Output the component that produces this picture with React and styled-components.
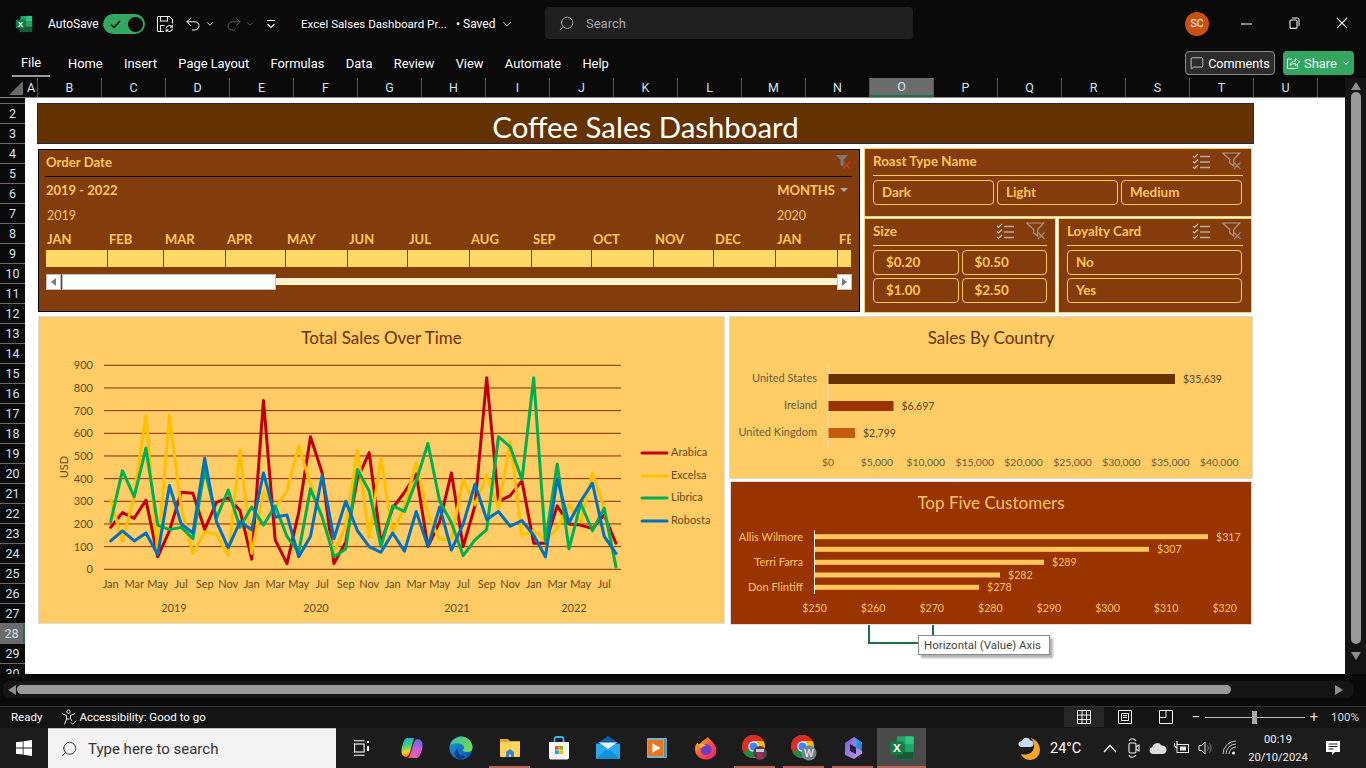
import React from "react";
import styled, { createGlobalStyle } from "styled-components";
import { ChevronDown, Search as SearchGlyph, Undo2, Redo2, MessageSquare } from "lucide-react";

const Global = createGlobalStyle`
  * { box-sizing: border-box; }
  html, body { margin: 0; padding: 0; background: #0a0a0a; overflow: hidden; }
  body { font-family: Roboto, "Liberation Sans", sans-serif; }
`;

const UI = `Roboto, "Liberation Sans", sans-serif`;
const CAL = `Lato, "Open Sans", sans-serif`;

const Page = styled.div`
  width: 1366px; height: 768px; display: flex; flex-direction: column; background: #0a0a0a; overflow: hidden;
`;

/* ---------- title bar ---------- */
const TitleBar = styled.header`
  height: 46px; flex: none; display: flex; align-items: center; padding-top: 2px; color: #fff; font-size: 12px;
`;
const TitleItem = styled.div`
  flex: none; display: flex; align-items: center; justify-content: center;
  width: ${p => p.$w}px; margin-left: ${p => p.$ml || 0}px;
  color: ${p => p.$dim ? "#5e5e5e" : "#fff"}; white-space: nowrap;
`;
const TitleText = styled.div`
  flex: none; width: ${p => p.$w}px; margin-left: ${p => p.$ml || 0}px; white-space: nowrap; color: #fff; font-size: ${p => p.$fs || 12}px;
`;
const Toggle = styled.div`
  flex: none; width: 42px; height: 20px; margin-left: 8px; border-radius: 10px; background: #33a661;
  display: flex; align-items: center; justify-content: space-between; padding: 0 2px 0 7px;
`;
const ToggleKnob = styled.span`
  width: 15px; height: 15px; border-radius: 50%; background: #0a0a0a;
`;
const SearchBox = styled.div`
  flex: none; margin-left: 31px; width: 368px; height: 32px; margin-top: -2px; border-radius: 4px; background: #1f1f1f;
  display: flex; align-items: center; padding-left: 13px; gap: 11px; color: #a8a8a8; font-size: 13px;
`;
const FlippedSearch = styled(SearchGlyph)`
  transform: scaleX(-1); flex: none;
`;
const Avatar = styled.div`
  flex: none; width: 24px; height: 24px; border-radius: 50%; background: #ca5010; color: #fff; margin: -1px 13px 0 272px;
  display: flex; align-items: center; justify-content: center; font-size: 10.5px;
`;
const WinButton = styled.div`
  flex: none; width: 48px; display: flex; align-items: center; justify-content: center; margin-top: -2px;
`;

/* ---------- ribbon tabs ---------- */
const TabsBar = styled.nav`
  height: 32px; flex: none; display: flex; align-items: center; padding: 2px 0 0 12px; color: #fff; font-size: 12.9px; font-family: ${UI};
`;
const FileTab = styled.div`
  width: 38px; height: 28px; padding-top: 1px; display: flex; align-items: center; justify-content: center;
  border-bottom: 2px solid #9a9a9a; margin-right: 18px;
`;
const Tab = styled.div`
  margin-right: 21.3px; white-space: nowrap;
`;
const TabActions = styled.div`
  margin-left: auto; display: flex; gap: 8px; padding-right: 12px;
`;
const CommentsButton = styled.div`
  width: 90px; height: 24px; border: 1px solid #8a8a8a; border-radius: 4px; background: #2c2c2c;
  display: flex; align-items: center; justify-content: center; gap: 4px; font-size: 12.6px;
`;
const ShareButton = styled.div`
  width: 71px; height: 24px; border-radius: 4px; background: #33a661; color: #eaf6ee;
  display: flex; align-items: center; justify-content: center; gap: 4px; font-size: 12.9px;
`;

/* ---------- grid frame ---------- */
const GridFrame = styled.div`
  flex: none; height: 596px; display: flex;
`;
const GridMain = styled.div`
  width: 1345px; display: flex; flex-direction: column;
`;
const ColHeaders = styled.div`
  height: 19px; flex: none; display: flex; background: #0a0a0a; color: #d5e3ee; font-size: 12.5px; font-family: ${UI};
`;
const Corner = styled.div`
  width: 25px; flex: none; position: relative;
  &::after { content: ""; position: absolute; right: 2px; bottom: 2px; border-style: solid; border-width: 0 0 14px 14px; border-color: transparent transparent #6a6a6a transparent; }
`;
const ColHead = styled.div`
  flex: none; width: ${p => p.$w}px; display: flex; align-items: center; justify-content: center;
  border-right: 1px solid #555; 
  background: ${p => p.$on ? "#6b6b6b" : "transparent"};
  border-bottom: ${p => p.$on ? "2px solid #1e7145" : "none"};
`;
const SheetRow = styled.div`
  flex: 1; display: flex; min-height: 0; border-top: 1px solid #8a8a8a;
`;
const RowHeaders = styled.div`
  width: 25px; flex: none; background: #0a0a0a; display: flex; flex-direction: column; overflow: hidden;
  color: #d5e3ee; font-size: 12.5px; font-family: ${UI};
`;
const RowHead = styled.div`
  flex: none; height: ${p => p.$h || 20}px; display: flex; align-items: center; justify-content: center; overflow: hidden;
  border-bottom: 1px solid #6a6a6a;
  background: ${p => p.$on ? "#6b6b6b" : "transparent"};
  border-right: ${p => p.$on ? "2px solid #1e7145" : "none"};
`;
const Sheet = styled.main`
  flex: 1; background: #fff; position: relative; padding: 5px 0 0 12px; overflow: hidden;
`;
const VScroll = styled.div`
  width: 21px; flex: none; background: #141414; display: flex; flex-direction: column; align-items: center; padding-top: 4px;
`;
const VThumb = styled.div`
  width: 10px; height: 552px; margin-top: 2px; border-radius: 5px; background: #9a9a9a;
`;
const Arrow = styled.span`
  width: 0; height: 0; border-style: solid; flex: none;
  ${p => p.$dir === "up" && `border-width: 0 5px 8px 5px; border-color: transparent transparent #8e8e8e transparent;`}
  ${p => p.$dir === "down" && `border-width: 8px 5px 0 5px; border-color: #8e8e8e transparent transparent transparent; margin-top: 8px;`}
  ${p => p.$dir === "left" && `border-width: 5px 8px 5px 0; border-color: transparent #8e8e8e transparent transparent;`}
  ${p => p.$dir === "right" && `border-width: 5px 0 5px 8px; border-color: transparent transparent transparent #8e8e8e; margin-left: auto;`}
`;

/* ---------- dashboard ---------- */
const Banner = styled.div`
  width: 1217px; height: 41px; background: #643200; border: 1px solid #1f2b4a; color: #fff;
  display: flex; align-items: center; justify-content: center; font: 400 29.4px ${CAL}; padding-top: 6px;
`;
const TopRow = styled.div`
  display: flex; margin: 4px 0 0 1px; height: 165px; gap: 4px;
`;
const Timeline = styled.section`
  width: 822px; height: 163px; margin-top: 1px; background: #833c0b; border: 1px solid #000;
  padding: 0 7px 0 6px; color: #ffc75f; font-family: ${CAL};
`;
const TimelineHead = styled.div`
  height: 27px; padding: 0 0 2px 1px; display: flex; align-items: center; justify-content: space-between; border-bottom: 1px solid #000;
  font-size: 13.2px; font-weight: 700;
`;
const TimelineSpan = styled.div`
  height: 26px; display: flex; align-items: center; justify-content: space-between; padding: 0 4px 0 1px; font-size: 13px; font-weight: 700;
`;
const MonthsMenu = styled.div`
  display: flex; align-items: center; gap: 5px;
`;
const MiniCaret = styled.span`
  border-style: solid; border-width: 4px 4px 0 4px; border-color: #a8a8a8 transparent transparent transparent;
`;
const YearRow = styled.div`
  height: 24px; display: flex; align-items: center; justify-content: space-between; padding: 0 46px 0 2px; font-size: 12.5px;
`;
const Months = styled.div`
  display: flex; margin-left: 1px;
`;
const Month = styled.div`
  flex: none; width: ${p => p.$w}px; overflow: hidden;
`;
const MonthName = styled.div`
  height: 23px; display: flex; align-items: center; font-size: 13px; font-weight: 700; white-space: nowrap; padding-left: 1px;
`;
const MonthBar = styled.div`
  height: 17px; background: #ffd966; border-right: ${p => p.$last ? "none" : "1px solid #833c0b"};
`;
const TimeScroll = styled.div`
  display: flex; align-items: center; height: 17px; margin: 6px 0 0 1px; width: 806px;
`;
const ScrollBtn = styled.div`
  flex: none; width: 15px; height: 16px; background: #fff; border: 1px solid #bdbdbd; display: flex; align-items: center; justify-content: center;
`;
const ScrollGlyph = styled.span`
  border-style: solid; border-width: 4px 0 4px 5px; border-color: transparent transparent transparent #7a7a7a;
  transform: ${p => p.$left ? "scaleX(-1)" : "none"};
`;
const TimeThumb = styled.div`
  flex: none; width: 214px; height: 16px; background: #fff; border: 1px solid #bdbdbd; margin-left: 1px;
`;
const TimeTrack = styled.div`
  flex: 1; height: 7px; background: #fff2cc;
`;
const SlicerStack = styled.div`
  width: 388px; display: flex; flex-direction: column; gap: 1px;
`;
const SlicerRow = styled.div`
  display: flex; gap: 2px; flex: none;
`;
const Slicer = styled.section`
  flex: none; width: ${p => p.$w}px; height: ${p => p.$h}px; background: #843c0c; border: 1px solid #ffcc66;
  padding: 0 8px; font-family: ${CAL}; color: #ffc65c; font-weight: 700; font-size: 13.4px;
`;
const SlicerHead = styled.div`
  height: 27px; padding-bottom: 2px; display: flex; align-items: center; border-bottom: 1px solid #ffcc66;
`;
const SlicerTitle = styled.div`
  flex: 1;
`;
const SlicerTools = styled.div`
  display: flex; align-items: center; gap: 11px; margin-right: 1px;
`;
const SlicerGrid = styled.div`
  display: grid; grid-template-columns: repeat(${p => p.$cols}, 1fr); gap: 3px; margin: 4px ${p => p.$cols === 2 ? 0 : 1}px 0 0;
`;
const SlicerItem = styled.div`
  height: 25px; padding: 0 0 1px ${p => p.$pad || 8}px; border: 1px solid #ffc75f; border-radius: 4px; display: flex; align-items: center;
`;
const BottomRow = styled.div`
  display: flex; gap: 4px; margin: 3px 0 0 1px; position: relative;
`;
const LinePanel = styled.section`
  width: 687px; height: 308px; background: #ffcc66; border: 1px solid #dcdcdc; display: flex; flex-direction: column;
`;
const ChartTitle = styled.h2`
  margin: 0; flex: none; height: ${p => p.$h}px; display: flex; align-items: center; justify-content: center;
  padding: ${p => p.$top || 0}px 0 ${p => p.$bottom || 0}px;
  font: 400 17px ${CAL}; color: ${p => p.$light ? "#ffc65c" : "#663300"};
`;
const RightCol = styled.div`
  width: 524px; display: flex; flex-direction: column; align-items: center; gap: 2px;
`;
const CountryPanel = styled.section`
  width: 524px; height: 163px; background: #ffcc66; border: 1px solid #d5dcd8; display: flex; flex-direction: column;
`;
const CustomersPanel = styled.section`
  width: 522px; height: 144px; background: #993300; border: 1px solid #dcdcdc; display: flex; flex-direction: column;
`;
const Plot = styled.svg`
  display: block; flex: none; font-family: ${CAL};
`;
const SelectBracket = styled.div`
  position: absolute; left: 830px; top: 309px; width: 66px; height: 19px;
  border-left: 2px solid #1e7145; border-bottom: 2px solid #1e7145;
  &::after { content: ""; position: absolute; right: 0; top: 0; height: 12px; border-right: 2px solid #1e7145; }
`;
const Tooltip = styled.div`
  position: absolute; left: 880px; top: 319px; width: 132px; height: 20px; background: #fff; border: 1px solid #8a8a8a;
  box-shadow: 3px 3px 2px rgba(0,0,0,.3); font: 400 11.5px ${UI}; color: #444; display: flex; align-items: center; padding-left: 5px; white-space: nowrap;
`;

/* ---------- scroll + status ---------- */
const HScroll = styled.div`
  height: 33px; flex: none; padding: 7px 13px 8px 3px; border-bottom: 1px solid #333; display: flex; align-items: stretch;
`;
const HTrack = styled.div`
  flex: 1; background: #151515; border-radius: 6px; display: flex; align-items: center; padding: 0 10px 0 5px;
`;
const HThumb = styled.div`
  width: 1214px; height: 9px; border-radius: 5px; background: #999; margin-left: 1px;
`;
const StatusBar = styled.footer`
  height: 21px; flex: none; background: #141414; display: flex; align-items: center; color: #fff; font-size: 11.5px; font-family: ${UI}; padding-bottom: 1px;
`;
const StatusText = styled.div`
  margin-left: ${p => p.$ml || 0}px; white-space: nowrap; display: flex; align-items: center;
`;
const ViewButton = styled.div`
  width: 40px; height: 20px; margin-right: 1px; display: flex; align-items: center; justify-content: center; background: ${p => p.$on ? "#262626" : "transparent"};
`;
const ViewGroup = styled.div`
  margin-left: auto; display: flex;
`;
const ZoomGroup = styled.div`
  display: flex; align-items: center; margin-left: 3px; margin-right: 7px; color: #ddd;
`;
const ZoomTrack = styled.div`
  width: 100px; height: 1px; background: #bbb; margin: 0 3px; position: relative;
  &::after { content: ""; position: absolute; left: 47px; top: -6px; width: 5px; height: 13px; background: #a8a8a8; }
`;
const ZoomSign = styled.span`
  font-size: 15px; width: 12px; text-align: center;
`;
const ZoomValue = styled.span`
  margin-left: 11px; font-size: 11.5px; width: 28px;
`;

/* ---------- taskbar ---------- */
const Taskbar = styled.div`
  height: 40px; flex: none; background: #1c1c1c; display: flex; align-items: stretch; color: #fff;
`;
const StartButton = styled.div`
  width: 48px; display: flex; align-items: center; justify-content: center;
`;
const TaskSearch = styled.div`
  width: 288px; background: #f3f3f3; border-top: 1px solid #bdbdbd; display: flex; align-items: center; padding-left: 12px; gap: 10px;
  color: #333; font-size: 15px; font-family: ${UI};
`;
const TaskViewButton = styled.div`
  width: 51px; display: flex; align-items: center; justify-content: center;
`;
const TaskIcon = styled.div`
  width: 49px; position: relative; display: flex; align-items: center; justify-content: center;
  background: ${p => p.$active ? "#4a4a4a" : "transparent"};
  ${p => p.$open && `&::after { content: ""; position: absolute; bottom: 0; height: 2px; left: ${p.$active ? 0 : 4}px; right: ${p.$active ? 0 : 4}px; background: #b5655a; }`}
`;
const Tray = styled.div`
  margin-left: auto; display: flex; align-items: center; padding-right: 14px; font-family: ${UI};
`;
const Temp = styled.div`
  width: 30px; margin: 0 18px 0 8px; font-size: 14.5px; white-space: nowrap;
`;
const TrayIcon = styled.div`
  width: 24px; display: flex; align-items: center; justify-content: center;
`;
const Clock = styled.div`
  width: 72px; padding-top: 1px; text-align: center; font-size: 11.2px; line-height: 18px; color: #f2f2f2;
`;
const Notify = styled.div`
  width: 38px; display: flex; justify-content: center;
`;

/* ---------- icons ---------- */
const ExcelLogo = ({ s = 18 }) => (
  <svg width={s} height={s} viewBox="0 0 20 20">
    <rect x="6" y="1" width="13" height="18" rx="1" fill="#21a366" />
    <rect x="12.5" y="1" width="6.5" height="6" fill="#33c481" />
    <rect x="6" y="7" width="6.5" height="6" fill="#107c41" />
    <rect x="12.5" y="7" width="6.5" height="6" fill="#21a366" />
    <rect x="6" y="13" width="13" height="6" fill="#185c37" />
    <rect x="1" y="5" width="10" height="10" rx="1" fill="#107c41" />
    <text x="6" y="13" textAnchor="middle" fontSize="9" fontWeight="700" fill="#fff" fontFamily="Liberation Sans">X</text>
  </svg>
);
const SaveIcon = () => (
  <svg width="18" height="18" viewBox="0 0 18 18" fill="none" stroke="#e8e8e8" strokeWidth="1.1">
    <path d="M1.5 1.5h12l3 3v4M8 16.5H1.5z" />
    <path d="M1.5 1.5v15M4.5 1.5v4.5h7V1.5M4.5 16.5v-6h4" />
    <path d="M10 13.5a3.3 3.3 0 0 1 6-1.5M16.5 13.5a3.3 3.3 0 0 1-6 1.5M16.3 10v2.3H14M10.2 17v-2.3h2.3" />
  </svg>
);
const CustomizeIcon = () => (
  <svg width="12" height="12" viewBox="0 0 12 12" fill="none" stroke="#e8e8e8" strokeWidth="1.2">
    <path d="M2 2.5h8M2.5 6l3.5 3.5L9.5 6" />
  </svg>
);
const MinIcon = () => <svg width="11" height="11" viewBox="0 0 11 11"><path d="M0 6h11" stroke="#eee" strokeWidth="1.1" /></svg>;
const RestoreIcon = () => (
  <svg width="11" height="12" viewBox="0 0 11 12" fill="none" stroke="#eee" strokeWidth="1.1">
    <rect x="1" y="3" width="7" height="8.4" rx="1.2" /><path d="M3 1h5.5a1.5 1.5 0 0 1 1.5 1.5V9" />
  </svg>
);
const CloseIcon = () => <svg width="12" height="12" viewBox="0 0 12 12"><path d="M1 1l10 10M11 1L1 11" stroke="#eee" strokeWidth="1.1" /></svg>;
const ShareIcon = () => (
  <svg width="14" height="14" viewBox="0 0 14 14" fill="none" stroke="#eaf6ee" strokeWidth="1">
    <path d="M6 3H1.5v9.5h10V8" /><path d="M4 9.5c.5-3 2.5-4.5 5.5-4.5V2.5l4 3.5-4 3.5V7.5C7 7.5 5.5 8 4 9.5z" />
  </svg>
);
const MultiSelect = () => (
  <svg width="19" height="17" viewBox="0 0 19 17" fill="none" stroke="#cfc6b8" strokeWidth="1.1">
    <path d="M1 3l1.5 1.5L6 1M1 8.5L2.5 10 6 6.5M1 14l1.5 1.500L6 12" />
    <path d="M8 3.5h10M8 9h10M8 14.5h10" strokeWidth="1.5" stroke="#b9ab99" />
  </svg>
);
const ClearFilter = () => (
  <svg width="20" height="18" viewBox="0 0 20 18" fill="none">
    <path d="M.7 1h17l-6 6.500V14l-4-3V7.500z" stroke="#a89a8a" strokeWidth="1.2" />
    <path d="M12 10.500l6.500 6.500M18.500 10.500L12 17" stroke="#a08f7e" strokeWidth="1.2" />
  </svg>
);
const TimelineClear = () => (
  <svg width="17" height="16" viewBox="0 0 17 16">
    <path d="M1 1h12l-4.500 5v7l-3-2V6z" fill="#7a7a7a" />
    <path d="M8.500 8l6.500 6.500M15 8l-6.500 6.500" stroke="#c8401e" strokeWidth="1.4" />
  </svg>
);
const AccessIcon = () => (
  <svg width="17" height="17" viewBox="0 0 17 17" fill="none" stroke="#e8e8e8" strokeWidth="1">
    <circle cx="7.500" cy="2.700" r="1.700" />
    <path d="M1 4.500l4.500 2v3.500L3.500 15.500M14 4.500l-4.500 2v3L11 12M5.500 10h3" />
    <path d="M10 13.500l1.700 1.800 3.500-3.800" />
  </svg>
);
const NormalView = () => (
  <svg width="14" height="14" viewBox="0 0 14 14" fill="none" stroke="#f2f2f2"><path d="M.5.5h13v13H.5zM.5 5h13M.5 9.500h13M5 .5v13M9.500.5v13" /></svg>
);
const LayoutView = () => (
  <svg width="14" height="14" viewBox="0 0 14 14" fill="none" stroke="#f2f2f2"><path d="M.5.5h13v13H.5zM3.500 3.500h7v7h-7zM5 5.500h4M5 7.500h4" /></svg>
);
const BreakView = () => (
  <svg width="14" height="14" viewBox="0 0 14 14" fill="none" stroke="#f2f2f2"><path d="M.5.5h13v13H.5zM7 .5v7H.5" /></svg>
);
const WindowsIcon = () => (
  <svg width="16" height="16" viewBox="0 0 16 16" fill="#fff"><path d="M0 2.300l6.700-.9v6.200H0zM7.500 1.300L16 0v7.600H7.500zM0 8.400h6.700v6.200L0 13.700zM7.500 8.400H16V16l-8.500-1.200z" /></svg>
);
const TaskViewIcon = () => (
  <svg width="16" height="16" viewBox="0 0 16 16" fill="none" stroke="#fff" strokeWidth="1.100">
    <path d="M0 .7h10.500M0 15.300h10.500" /><rect x=".6" y="4" width="9.500" height="8" />
    <path d="M14 1v2M14 6v5" strokeWidth="2" />
  </svg>
);
const CopilotIcon = () => (
  <svg width="24" height="24" viewBox="0 0 24 24">
    <defs>
      <linearGradient id="cpA" x1="0.3" y1="0" x2="0.5" y2="1"><stop offset="0" stopColor="#1fa8ee" /><stop offset=".4" stopColor="#3dd17c" /><stop offset=".72" stopColor="#f5d020" /><stop offset="1" stopColor="#f0583a" /></linearGradient>
      <linearGradient id="cpB" x1="0.5" y1="0" x2="0.5" y2="1"><stop offset="0" stopColor="#5a6be8" /><stop offset=".5" stopColor="#c45ae0" /><stop offset="1" stopColor="#ee5fa0" /></linearGradient>
    </defs>
    <path d="M7 2h7l-4 14c-.8 3-2 5-4 5-3 0-5-3-4.500-7C2 10 3.500 3 7 2z" fill="url(#cpA)" />
    <path d="M17 22h-8l4-13c.8-3 2.500-6 4.500-6 3 0 5.500 3 5 7-.5 4-2 11-5.500 12z" fill="url(#cpB)" />
    <path d="M9.500 20c-1 1.500-2 2-3 2h8c-2.500 0-4-1-5-2z" fill="#f0583a" />
  </svg>
);
const EdgeIcon = () => (
  <svg width="24" height="24" viewBox="0 0 24 24">
    <defs>
      <linearGradient id="edA" x1="0" y1="0" x2="1" y2="1"><stop offset="0" stopColor="#35c1a0" /><stop offset="1" stopColor="#7fdc4a" /></linearGradient>
      <linearGradient id="edB" x1="0" y1="0" x2="1" y2="1"><stop offset="0" stopColor="#1f9be0" /><stop offset="1" stopColor="#0b4fa8" /></linearGradient>
    </defs>
    <circle cx="12" cy="12" r="11.500" fill="url(#edB)" />
    <path d="M1 10C3 3 9 .5 12 .5c6 0 11.500 4.500 11.500 11 0 3-2.500 4.500-5 4.500-3 0-4.500-1-5-2 2-1 2-4-.5-5.500C9 6.500 3 6.500 1 10z" fill="url(#edA)" />
    <path d="M9 14c0 4 4 7 8 6-2 2.500-5 3.500-7 3-3-.6-5-4-4-7 .5-1.500 1.500-3 3-3.500-.3.400 0 1 0 1.500z" fill="#0e3f8c" />
  </svg>
);
const FolderIcon = () => (
  <svg width="22" height="20" viewBox="0 0 22 20">
    <path d="M1 1h8l2 2h10v3H1z" fill="#e0a92e" />
    <rect x="1" y="4" width="20" height="15" rx="1" fill="#ffd55c" />
    <path d="M7 19v-5l4-3 4 3v5h-3v-2.500h-2V19z" fill="#2f86d6" />
  </svg>
);
const StoreIcon = () => (
  <svg width="22" height="24" viewBox="0 0 22 24">
    <path d="M6.500 7V3a2 2 0 0 1 2-2h5a2 2 0 0 1 2 2v4" fill="none" stroke="#3bb7ea" strokeWidth="1.800" />
    <path d="M1 6h20v15.500a2 2 0 0 1-2 2H3a2 2 0 0 1-2-2z" fill="#f7f7f7" />
    <rect x="7" y="10" width="3.700" height="3.700" fill="#f25022" /><rect x="11.300" y="10" width="3.700" height="3.700" fill="#7fba00" />
    <rect x="7" y="14.300" width="3.700" height="3.700" fill="#00a4ef" /><rect x="11.300" y="14.300" width="3.700" height="3.700" fill="#ffb900" />
  </svg>
);
const MailIcon = () => (
  <svg width="24" height="24" viewBox="0 0 24 24">
    <path d="M0 8L12 0l12 8v2H0z" fill="#0f5fa8" />
    <path d="M0 8h24v15H0z" fill="#28a8ea" />
    <path d="M3 6.500h18L12 13z" fill="#e7f4fc" />
    <path d="M0 23l10-9 2 1 2-1 10 9z" fill="#1590da" />
  </svg>
);
const MediaIcon = () => (
  <svg width="22" height="22" viewBox="0 0 22 22">
    <rect x="1" y="1" width="20" height="20" rx="1" fill="#7fb2cc" />
    <rect x="2" y="3" width="15" height="16" rx="1" fill="#e8781f" />
    <path d="M6.500 6.500v9l8-4.500z" fill="#fff" />
    <path d="M18 2h2.500v18H18z" fill="#5b8fa8" />
  </svg>
);
const FirefoxIcon = () => (
  <svg width="24" height="24" viewBox="0 0 24 24">
    <defs>
      <linearGradient id="ffA" x1="0" y1="0" x2="1" y2="1"><stop offset="0" stopColor="#ffbd2e" /><stop offset=".5" stopColor="#ff5634" /><stop offset="1" stopColor="#e31587" /></linearGradient>
    </defs>
    <path d="M14 1c1 2.500 3 3 5 5.500 3 3.500 4 7 3 10.500-1.500 4.500-5.500 6.500-10 6.500C6 23.500 1 19 1 13c0-3 1-5 2.500-6.500C4 8 5 8.500 6 8.500 7 5 11 4 14 1z" fill="url(#ffA)" />
    <circle cx="12" cy="13.500" r="5.500" fill="#6e3bc9" />
    <path d="M5 8c3-1.500 6 .5 7 2-3 0-4 1-4.500 2.500C6.500 12 5 10 5 8z" fill="#ffb12e" />
  </svg>
);
const ChromeIcon = ({ badge }) => (
  <svg width="26" height="26" viewBox="0 0 26 26">
    <circle cx="11.500" cy="11.500" r="11.500" fill="#d93025" />
    <path d="M11.500 11.500L1.500 17.300A11.500 11.500 0 0 0 11.500 23c2 0 4-.5 5.700-1.500z" fill="#1e8e3e" />
    <path d="M11.500 6h10A11.500 11.500 0 0 1 11.500 23l5.500-9.500z" fill="#fbbc04" />
    <path d="M1.500 5.700L6.500 14.500 11.500 6h10A11.500 11.500 0 0 0 11.500 0 11.500 11.500 0 0 0 1.500 5.700z" fill="#d93025" />
    <circle cx="11.500" cy="11.500" r="5.200" fill="#fff" />
    <circle cx="11.500" cy="11.500" r="4.100" fill="#4285f4" />
    {badge === "w" ? (
      <>
        <circle cx="18" cy="18" r="7.500" fill="#6f8490" />
        <text x="18" y="21.500" textAnchor="middle" fontSize="10" fill="#fff" fontFamily="Liberation Sans">W</text>
      </>
    ) : (
      <>
        <circle cx="18" cy="18" r="7" fill="#56404a" />
        <path d="M14 14h8v3h-8z" fill="#c9c9c9" /><path d="M16 17h4l1 7h-6z" fill="#a02c5c" />
      </>
    )}
  </svg>
);
const M365Icon = () => (
  <svg width="22" height="24" viewBox="0 0 22 24">
    <defs>
      <linearGradient id="msA" x1="0" y1="0" x2="1" y2="1"><stop offset="0" stopColor="#7a5ad6" /><stop offset="1" stopColor="#c39be8" /></linearGradient>
      <linearGradient id="msB" x1="0" y1="0" x2="1" y2="1"><stop offset="0" stopColor="#25b4e6" /><stop offset="1" stopColor="#2e6ed6" /></linearGradient>
    </defs>
    <path d="M12 1l8 5.500v11L12 23l-9-4V7z" fill="url(#msA)" />
    <path d="M12 1l8 5.500V15l-6-3.500V6z" fill="url(#msB)" />
    <path d="M8 8l6 3.500V18l-6-3z" fill="#231f3a" />
  </svg>
);
const WeatherIcon = () => (
  <svg width="24" height="28" viewBox="0 0 24 28">
    <path d="M13 4a12 12 0 0 1 9 12c0 6-5 10-10 10-4 0-8-3-9-6 6 2 13-1 13-8 0-3-1-6-3-8z" fill="#f4a52a" />
    <path d="M3 13a3 3 0 0 1 1-6 4.500 4.500 0 0 1 8.500-.5A3.300 3.300 0 0 1 13 13z" fill="#c7dcf2" />
  </svg>
);
const TrayChevron = () => <svg width="14" height="9" viewBox="0 0 14 9" fill="none" stroke="#fff" strokeWidth="1.200"><path d="M1 8l6-6.500L13 8" /></svg>;
const MeetIcon = () => (
  <svg width="12" height="22" viewBox="0 0 12 22" fill="none" stroke="#eee" strokeWidth="1.100">
    <rect x="1" y="6" width="7" height="10" rx="1.500" /><path d="M8 10l3-2v6l-3-2M1 4c1-3 5-3 7 0M1 18c1 3 5 3 7 0" />
  </svg>
);
const CloudIcon = () => <svg width="18" height="12" viewBox="0 0 18 12" fill="#dcdcdc"><path d="M4 12a3.500 3.500 0 0 1-.7-6.900A5 5 0 0 1 12.500 3.500 4.300 4.300 0 0 1 14 12z" /></svg>;
const BatteryIcon = () => (
  <svg width="16" height="14" viewBox="0 0 16 14" fill="none" stroke="#eee">
    <rect x="3" y="3.500" width="11.500" height="8" /><rect x="6" y="5.500" width="6" height="4" fill="#eee" stroke="none" />
    <path d="M3 0v3.500M.5 2v3l2.500 2" strokeWidth="1.200" />
  </svg>
);
const SpeakerIcon = () => (
  <svg width="16" height="16" viewBox="0 0 16 16" fill="none" stroke="#eee"><path d="M1 5.500h2.500L7 2v12l-3.500-3.500H1z" /><path d="M9.500 5.500a4 4 0 0 1 0 5M11.500 3.500a7 7 0 0 1 0 9" stroke="#8a8a8a" /></svg>
);
const WifiIcon = () => (
  <svg width="16" height="16" viewBox="0 0 16 16" fill="none" stroke="#bfbfbf"><path d="M1 14a13 13 0 0 1 13-13M4 14a10 10 0 0 1 10-10M7 14a7 7 0 0 1 7-7" /><circle cx="11.500" cy="13" r="1.500" fill="#eee" stroke="none" /></svg>
);
const NotifyIcon = () => (
  <svg width="16" height="16" viewBox="0 0 16 16">
    <path d="M1 1h14v11h-5l-3 3v-3H1z" fill="#fff" />
    <path d="M3.500 4h9M3.500 6.500h9M3.500 9h5" stroke="#222" strokeWidth="1" />
  </svg>
);

/* ---------- data ---------- */
const columns = ["B","C","D","E","F","G","H","I","J","K","L","M","N","O","P","Q","R","S","T","U"];
const rows = Array.from({ length: 29 }, (_, i) => i + 2);
const monthsData = [["JAN",62],["FEB",56],["MAR",62],["APR",60],["MAY",62],["JUN",60],["JUL",62],["AUG",62],["SEP",60],["OCT",62],["NOV",60],["DEC",62],["JAN",62],["FEB",13]];

const series = [
  { name: "Arabica", color: "#c00000", values: [185,250,225,305,55,170,340,335,175,295,315,260,45,745,130,25,250,585,425,25,120,400,515,115,270,340,420,100,210,425,100,280,845,300,325,390,115,115,280,200,195,180,240,115] },
  { name: "Excelsa", color: "#ffc000", values: [305,125,320,680,70,680,270,70,165,155,60,525,70,340,270,345,545,375,230,75,190,525,140,490,155,280,470,240,130,135,395,285,415,270,565,150,170,130,180,285,210,425,270,15] },
  { name: "Librica", color: "#00b050", values: [210,435,320,535,195,175,185,135,440,225,350,185,275,195,280,145,75,355,230,55,90,440,345,100,280,255,390,555,300,205,60,130,175,585,540,395,845,120,465,90,290,170,270,10] },
  { name: "Robosta", color: "#0070c0", values: [125,170,125,160,65,370,200,160,490,210,95,210,175,425,230,240,55,145,415,135,300,170,100,75,160,80,255,100,275,85,200,375,220,255,190,215,150,55,400,205,300,380,145,70] },
];
const xOf = i => 110.7 + i * 11.75;
const yOf = v => 569.3 - v * (204 / 900);
const monthTicks = ["Jan","Mar","May","Jul","Sep","Nov"];
const xTicks = Array.from({ length: 22 }, (_, i) => ({ label: monthTicks[i % 6], x: xOf(i * 2) }));
const years = [["2019",174],["2020",316],["2021",457],["2022",574]];
const legendY = [452, 475, 497, 520];

const countries = [
  { name: "United States", end: 1175, value: "$35,639", color: "#663300", y: 379 },
  { name: "Ireland", end: 893.5, value: "$6,697", color: "#993300", y: 406 },
  { name: "United Kingdom", end: 855, value: "$2,799", color: "#c55a11", y: 433 },
];
const countryTicks = ["$0","$5,000","$10,000","$15,000","$20,000","$25,000","$30,000","$35,000","$40,000"];

const customers = [
  { name: "Allis Wilmore", end: 1208, value: "$317", tx: 1216, y: 536.7 },
  { name: "", end: 1149, value: "$307", tx: 1157, y: 549.3 },
  { name: "Terri Farra", end: 1044, value: "$289", tx: 1052, y: 562.3 },
  { name: "", end: 1000, value: "$282", tx: 1008, y: 575 },
  { name: "Don Flintiff", end: 979, value: "$278", tx: 987, y: 587.3 },
];
const customerTicks = ["$250","$260","$270","$280","$290","$300","$310","$320"];

const LineChart = () => (
  <Plot width="685" height="271" viewBox="39 352 685 271">
    {Array.from({ length: 10 }, (_, i) => (
      <line key={i} x1="104" x2="621" y1={yOf(i * 100)} y2={yOf(i * 100)} stroke="#8a2a08" strokeWidth="1" />
    ))}
    {Array.from({ length: 10 }, (_, i) => (
      <text key={i} x="93" y={yOf(i * 100) + 4} textAnchor="end" fontSize="11" fill="#6b4a1a">{i * 100}</text>
    ))}
    <text transform="translate(68 467) rotate(-90)" textAnchor="middle" fontSize="11" fill="#6b4a1a">USD</text>
    {series.map(s => (
      <polyline key={s.name} fill="none" stroke={s.color} strokeWidth="3" strokeLinejoin="round" strokeLinecap="round"
        points={s.values.map((v, i) => `${xOf(i)},${yOf(v)}`).join(" ")} />
    ))}
    {xTicks.map((t, i) => <text key={i} x={t.x} y="588" textAnchor="middle" fontSize="11" fill="#6b4a1a">{t.label}</text>)}
    {years.map(([y, x]) => <text key={y} x={x} y="612" textAnchor="middle" fontSize="11" fill="#6b4a1a">{y}</text>)}
    {series.map((s, i) => (
      <g key={s.name}>
        <line x1="642" x2="667" y1={legendY[i] + 1} y2={legendY[i] + 1} stroke={s.color} strokeWidth="3" strokeLinecap="round" />
        <text x="671" y={legendY[i] + 4} fontSize="11" fill="#6b4a1a">{s.name}</text>
      </g>
    ))}
  </Plot>
);

const CountryChart = () => (
  <Plot width="522" height="118" viewBox="730 360 522 118">
    <line x1="828" x2="828" y1="366" y2="448" stroke="#d9d9d9" />
    {countries.map(c => (
      <g key={c.name}>
        <text x="817" y={c.y + 3} textAnchor="end" fontSize="11" fill="#6b5a3a">{c.name}</text>
        <rect x="828.5" y={c.y - 5} width={c.end - 828.5} height="10" fill={c.color} />
        <text x={c.end + 8} y={c.y + 4} fontSize="10.5" fill="#5a4420">{c.value}</text>
      </g>
    ))}
    {countryTicks.map((t, i) => <text key={t} x={828 + i * 48.9} y="466" textAnchor="middle" fontSize="10.4" fill="#6b5a3a">{t}</text>)}
  </Plot>
);

const CustomerChart = () => (
  <Plot width="520" height="100" viewBox="731 524 520 100">
    <line x1="814.5" x2="814.5" y1="530" y2="594" stroke="#f2f2f2" />
    {customers.map(c => (
      <g key={c.value}>
        {c.name && <text x="803" y={c.y + 4} textAnchor="end" fontSize="11" fill="#ffc65c">{c.name}</text>}
        <rect x="815" y={c.y - 2.5} width={c.end - 815} height="5" fill="#ffc65c" />
        <text x={c.tx} y={c.y + 4} fontSize="10.6" fill="#ffc65c">{c.value}</text>
      </g>
    ))}
    {customerTicks.map((t, i) => <text key={t} x={814.5 + i * 58.6} y="612" textAnchor="middle" fontSize="10.6" fill="#ffc65c">{t}</text>)}
  </Plot>
);

const SlicerHeader = ({ title }) => (
  <SlicerHead>
    <SlicerTitle>{title}</SlicerTitle>
    <SlicerTools><MultiSelect /><ClearFilter /></SlicerTools>
  </SlicerHead>
);

export default function App() {
  return (
    <Page>
      <Global />
      <TitleBar>
        <TitleItem $w={18} $ml={15}><ExcelLogo /></TitleItem>
        <TitleText $w={47} $ml={15}>AutoSave</TitleText>
        <Toggle>
          <svg width="11" height="9" viewBox="0 0 11 9" fill="none" stroke="#0a0a0a" strokeWidth="1.5"><path d="M1 4.500L4 7.500 10 1" /></svg>
          <ToggleKnob />
        </Toggle>
        <TitleItem $w={18} $ml={11}><SaveIcon /></TitleItem>
        <TitleItem $w={18} $ml={10}><Undo2 size={18} strokeWidth={1.3} /></TitleItem>
        <TitleItem $w={10} $ml={3}><ChevronDown size={10} /></TitleItem>
        <TitleItem $w={18} $ml={10} $dim><Redo2 size={18} strokeWidth={1.3} /></TitleItem>
        <TitleItem $w={10} $ml={2} $dim><ChevronDown size={10} /></TitleItem>
        <TitleItem $w={12} $ml={10}><CustomizeIcon /></TitleItem>
        <TitleText $w={150} $ml={24} $fs={11.6}>Excel Salses Dashboard Pr...</TitleText>
        <TitleText $w={44} $ml={5}>• Saved</TitleText>
        <TitleItem $w={14}><ChevronDown size={14} strokeWidth={1.4} /></TitleItem>
        <SearchBox>
          <FlippedSearch size={17} strokeWidth={1.3} />
          Search
        </SearchBox>
        <Avatar>SC</Avatar>
        <WinButton><MinIcon /></WinButton>
        <WinButton><RestoreIcon /></WinButton>
        <WinButton><CloseIcon /></WinButton>
      </TitleBar>

      <TabsBar>
        <FileTab>File</FileTab>
        {["Home","Insert","Page Layout","Formulas","Data","Review","View","Automate","Help"].map(t => <Tab key={t}>{t}</Tab>)}
        <TabActions>
          <CommentsButton><MessageSquare size={14} strokeWidth={1.2} />Comments</CommentsButton>
          <ShareButton><ShareIcon />Share<ChevronDown size={10} /></ShareButton>
        </TabActions>
      </TabsBar>

      <GridFrame>
        <GridMain>
          <ColHeaders>
            <Corner />
            <ColHead $w={13}>A</ColHead>
            {columns.map(c => <ColHead key={c} $w={64} $on={c === "O"}>{c}</ColHead>)}
          </ColHeaders>
          <SheetRow>
            <RowHeaders>
              <RowHead $h={6} />
              {rows.map(r => <RowHead key={r} $on={r === 28}>{r}</RowHead>)}
            </RowHeaders>
            <Sheet>
              <Banner>Coffee Sales Dashboard</Banner>
              <TopRow>
                <Timeline>
                  <TimelineHead>Order Date<TimelineClear /></TimelineHead>
                  <TimelineSpan>2019 - 2022<MonthsMenu>MONTHS<MiniCaret /></MonthsMenu></TimelineSpan>
                  <YearRow><span>2019</span><span>2020</span></YearRow>
                  <Months>
                    {monthsData.map(([m, w], i) => (
                      <Month key={i} $w={w}>
                        <MonthName>{m}</MonthName>
                        <MonthBar $last={i === monthsData.length - 1} />
                      </Month>
                    ))}
                  </Months>
                  <TimeScroll>
                    <ScrollBtn><ScrollGlyph $left /></ScrollBtn>
                    <TimeThumb />
                    <TimeTrack />
                    <ScrollBtn><ScrollGlyph /></ScrollBtn>
                  </TimeScroll>
                </Timeline>
                <SlicerStack>
                  <Slicer $w={388} $h={69}>
                    <SlicerHeader title="Roast Type Name" />
                    <SlicerGrid $cols={3}>
                      {["Dark","Light","Medium"].map(x => <SlicerItem key={x}>{x}</SlicerItem>)}
                    </SlicerGrid>
                  </Slicer>
                  <SlicerRow>
                    <Slicer $w={192} $h={95}>
                      <SlicerHeader title="Size" />
                      <SlicerGrid $cols={2}>
                        {["$0.20","$0.50","$1.00","$2.50"].map(x => <SlicerItem key={x} $pad={12}>{x}</SlicerItem>)}
                      </SlicerGrid>
                    </Slicer>
                    <Slicer $w={194} $h={95}>
                      <SlicerHeader title="Loyalty Card" />
                      <SlicerGrid $cols={1}>
                        {["No","Yes"].map(x => <SlicerItem key={x}>{x}</SlicerItem>)}
                      </SlicerGrid>
                    </Slicer>
                  </SlicerRow>
                </SlicerStack>
              </TopRow>
              <BottomRow>
                <LinePanel>
                  <ChartTitle $h={35} $top={6}>Total Sales Over Time</ChartTitle>
                  <LineChart />
                </LinePanel>
                <RightCol>
                  <CountryPanel>
                    <ChartTitle $h={43} $bottom={2}>Sales By Country</ChartTitle>
                    <CountryChart />
                  </CountryPanel>
                  <CustomersPanel>
                    <ChartTitle $h={42} $bottom={2} $light>Top Five Customers</ChartTitle>
                    <CustomerChart />
                  </CustomersPanel>
                </RightCol>
                <SelectBracket />
                <Tooltip>Horizontal (Value) Axis</Tooltip>
              </BottomRow>
            </Sheet>
          </SheetRow>
        </GridMain>
        <VScroll>
          <Arrow $dir="up" />
          <VThumb />
          <Arrow $dir="down" />
        </VScroll>
      </GridFrame>

      <HScroll>
        <HTrack>
          <Arrow $dir="left" />
          <HThumb />
          <Arrow $dir="right" />
        </HTrack>
      </HScroll>

      <StatusBar>
        <StatusText $ml={11}>Ready</StatusText>
        <StatusText $ml={19}><AccessIcon /></StatusText>
        <StatusText $ml={1}>Accessibility: Good to go</StatusText>
        <ViewGroup>
          <ViewButton $on><NormalView /></ViewButton>
          <ViewButton><LayoutView /></ViewButton>
          <ViewButton><BreakView /></ViewButton>
        </ViewGroup>
        <ZoomGroup>
          <ZoomSign>−</ZoomSign>
          <ZoomTrack />
          <ZoomSign>+</ZoomSign>
          <ZoomValue>100%</ZoomValue>
        </ZoomGroup>
      </StatusBar>

      <Taskbar>
        <StartButton><WindowsIcon /></StartButton>
        <TaskSearch>
          <FlippedSearch size={18} strokeWidth={1.3} />
          Type here to search
        </TaskSearch>
        <TaskViewButton><TaskViewIcon /></TaskViewButton>
        <TaskIcon><CopilotIcon /></TaskIcon>
        <TaskIcon><EdgeIcon /></TaskIcon>
        <TaskIcon $open><FolderIcon /></TaskIcon>
        <TaskIcon><StoreIcon /></TaskIcon>
        <TaskIcon><MailIcon /></TaskIcon>
        <TaskIcon><MediaIcon /></TaskIcon>
        <TaskIcon><FirefoxIcon /></TaskIcon>
        <TaskIcon $open><ChromeIcon /></TaskIcon>
        <TaskIcon $open><ChromeIcon badge="w" /></TaskIcon>
        <TaskIcon $open><M365Icon /></TaskIcon>
        <TaskIcon $open $active><ExcelLogo s={26} /></TaskIcon>
        <Tray>
          <WeatherIcon />
          <Temp>24°C</Temp>
          <TrayIcon><TrayChevron /></TrayIcon>
          <TrayIcon><MeetIcon /></TrayIcon>
          <TrayIcon><CloudIcon /></TrayIcon>
          <TrayIcon><BatteryIcon /></TrayIcon>
          <TrayIcon><SpeakerIcon /></TrayIcon>
          <TrayIcon><WifiIcon /></TrayIcon>
          <Clock>00:19<br />20/10/2024</Clock>
          <Notify><NotifyIcon /></Notify>
        </Tray>
      </Taskbar>
    </Page>
  );
}
